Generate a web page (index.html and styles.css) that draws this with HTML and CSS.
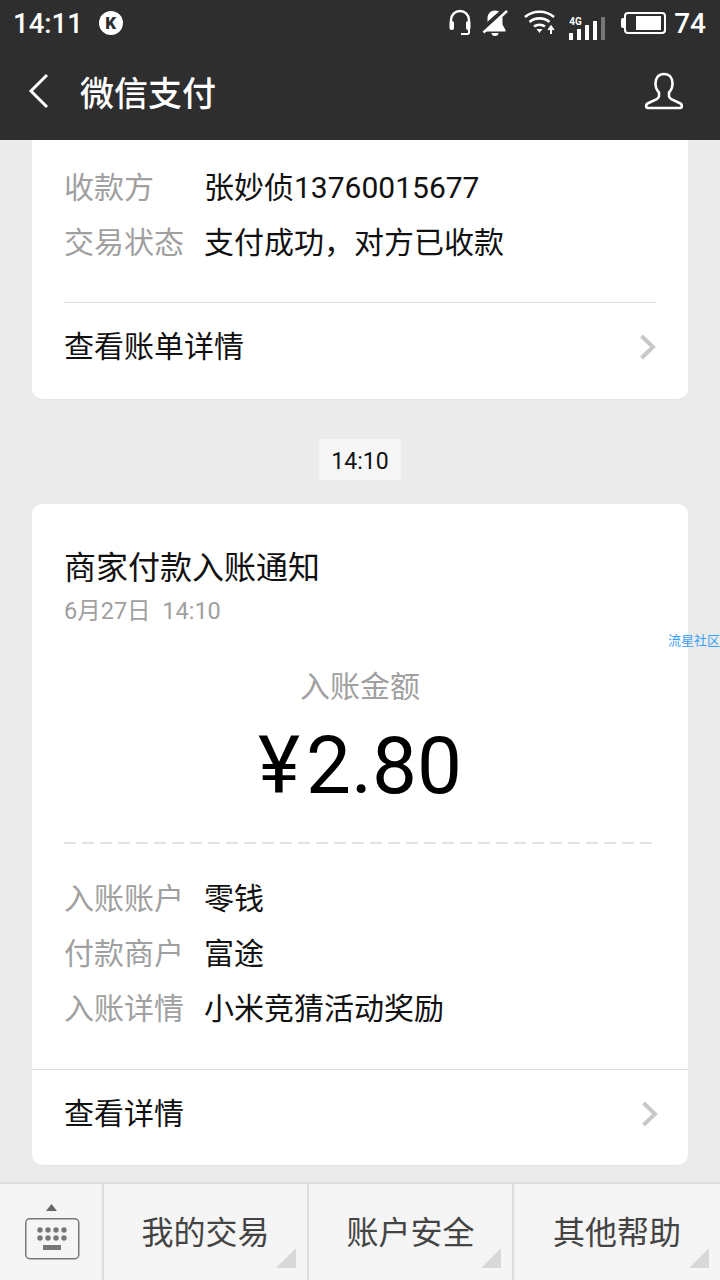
FILE: index.html
```html
<!DOCTYPE html>
<html>
<head>
<meta name="viewport" content="width=device-width, initial-scale=1">
<link rel="stylesheet" href="styles.css">
</head>
<body>

<div class="phone">
  <div class="statusbar">
    <div class="status-left">
      <span class="clock">14:11</span>
      <span class="k-badge">K</span>
    </div>
    <div class="status-right">
      <!-- headset -->
      <svg class="ic-headset" width="24" height="28" viewBox="0 0 24 28" fill="none" stroke="#fff">
        <path d="M3 14V11a9 9 0 0 1 18 0v3" stroke-width="2.4"/>
        <rect x="1.500" y="12" width="4.500" height="9" rx="2" fill="#fff" stroke="none"/>
        <rect x="18" y="12" width="4.500" height="9" rx="2" fill="#fff" stroke="none"/>
        <path d="M21 20v3.500a1.500 1.500 0 0 1-1.500 1.500H13" stroke-width="2"/>
      </svg>
      <!-- muted bell -->
      <svg class="ic-bell" width="26" height="28" viewBox="0 0 26 28">
        <path d="M13 1.500c-4.500 0-7.500 3.500-7.500 8v6L2.500 21v1.500h21V21l-3-5.500v-6c0-4.500-3-8-7.500-8z" fill="#fff"/>
        <path d="M9.500 24h7a3.500 3 0 0 1-7 0z" fill="#fff"/>
        <path d="M0 21.500 25 -0.500" stroke="#2e2e2e" stroke-width="6"/>
        <path d="M1.500 23.500 25 2" stroke="#fff" stroke-width="2.400"/>
      </svg>
      <!-- wifi -->
      <svg class="ic-wifi" width="32" height="26" viewBox="0 2 32 26" fill="none" stroke="#fff" stroke-width="2.600">
        <path d="M1 9C9 2 22 2 30 9"/>
        <path d="M5.500 14c5.500-4.800 14.500-4.800 20 0"/>
        <path d="M10 18.500c3-2.400 8-2.400 11 0"/>
        <path d="M12.500 21h6L15.500 25z" fill="#fff" stroke="none"/>
        <path d="M27 26v-6.500M24.300 22 27 18.500l2.700 3.500" stroke-width="2"/>
      </svg>
      <!-- signal -->
      <div class="signal">
        <span class="four-g">4G</span>
        <span class="bar bar1"></span>
        <span class="bar bar2"></span>
        <span class="bar bar3"></span>
        <span class="bar bar4"></span>
        <span class="bar bar5"></span>
      </div>
      <div class="battery">
        <span class="batt-tip"></span>
        <span class="batt-body"><span class="batt-fill"></span></span>
      </div>
      <span class="batt-num">74</span>
    </div>
  </div>

  <div class="navbar">
    <svg class="nav-back" width="22" height="36" viewBox="0 0 22 36" fill="none" stroke="#fff" stroke-width="3">
      <path d="M19 2 3 18l16 16"/>
    </svg>
    <span class="nav-title">微信支付</span>
    <svg class="nav-user" width="40" height="38" viewBox="0 0 40 38" fill="none" stroke="#fff" stroke-width="2.600">
      <path d="M20 2c-5.500 0-8.500 4-8.500 9.500 0 4 1.500 7 3.500 9v3.500c0 1.500-.8 2.400-2.200 3.100L3.500 31.500C1.800 32.400 1.500 36 4 36h32c2.500 0 2.200-3.600.5-4.500l-9.300-4.400c-1.400-.7-2.200-1.600-2.200-3.100v-3.500c2-2 3.500-5 3.500-9C28.500 6 25.500 2 20 2z"/>
    </svg>
  </div>

  <div class="feed">
    <div class="card card-top">
      <div class="rows rows-top">
        <div class="row"><span class="key">收款方</span><span class="val">张妙侦13760015677</span></div>
        <div class="row"><span class="key">交易状态</span><span class="val">支付成功，对方已收款</span></div>
      </div>
      <div class="link link-inset">
        <span class="link-text">查看账单详情</span>
        <svg width="17" height="26" viewBox="0 0 17 26" fill="none" stroke="#c8c8c8" stroke-width="4"><path d="M2.500 2 14 13 2.500 24"/></svg>
      </div>
    </div>

    <div class="time-wrap"><span class="time">14:10</span></div>

    <div class="card">
      <div class="card-head">
        <div class="card-title">商家付款入账通知</div>
        <div class="card-date">6月27日&nbsp;&nbsp;14:10</div>
      </div>
      <div class="amount-label">入账金额</div>
      <div class="amount"><span class="yen">¥</span>2.80</div>
      <div class="dashes"></div>
      <div class="rows">
        <div class="row"><span class="key">入账账户</span><span class="val">零钱</span></div>
        <div class="row"><span class="key">付款商户</span><span class="val">富途</span></div>
        <div class="row"><span class="key">入账详情</span><span class="val">小米竞猜活动奖励</span></div>
      </div>
      <div class="link link-full">
        <span class="link-text">查看详情</span>
        <svg width="17" height="26" viewBox="0 0 17 26" fill="none" stroke="#c8c8c8" stroke-width="4"><path d="M2.500 2 14 13 2.500 24"/></svg>
      </div>
    </div>
  </div>

  <div class="menu">
    <div class="menu-kbd">
      <svg width="56" height="57" viewBox="0 0 56 57">
        <path d="M21 8l5.500-7 5.500 7z" fill="#666"/>
        <rect x="0.750" y="15.750" width="53" height="40" rx="4" fill="none" stroke="#777" stroke-width="1.500"/>
        <g fill="#777">
          <circle cx="15" cy="27" r="2.700"/><circle cx="23" cy="27" r="2.700"/><circle cx="31" cy="27" r="2.700"/><circle cx="39" cy="27" r="2.700"/>
          <circle cx="15" cy="35" r="2.700"/><circle cx="23" cy="35" r="2.700"/><circle cx="31" cy="35" r="2.700"/><circle cx="39" cy="35" r="2.700"/>
          <rect x="18" y="42" width="18" height="5"/>
        </g>
      </svg>
    </div>
    <div class="menu-item">我的交易</div>
    <div class="menu-item">账户安全</div>
    <div class="menu-item">其他帮助</div>
  </div>

  <div class="watermark">流星社区</div>
</div>

</body>
</html>
```

FILE: styles.css
```css
* {
  box-sizing: border-box;
}

body {
  margin: 0;
  font-family: Roboto, "Noto Sans CJK SC", sans-serif;
  background: #ebebeb;
}

.phone {
  position: relative;
  width: 720px;
  height: 1280px;
  overflow: hidden;
  display: flex;
  flex-direction: column;
}

/* Status bar */
.statusbar {
  height: 46px;
  background: #2e2e2e;
  display: flex;
  justify-content: space-between;
  align-items: center;
  padding: 0 14px 0 13px;
  color: #fff;
}

.status-left, .status-right {
  display: flex;
  align-items: center;
}

.clock {
  font-size: 27.500px;
  font-weight: 500;
}

.batt-num {
  font-size: 28px;
  font-weight: 500;
}

.k-badge {
  width: 24px;
  height: 24px;
  margin-left: 16px;
  border-radius: 50%;
  background: #fff;
  color: #2e2e2e;
  font-size: 17px;
  font-weight: 900;
  display: flex;
  align-items: center;
  justify-content: center;
}

.ic-headset { margin-right: 10px; }
.ic-bell { margin-right: 16px; }
.ic-wifi { margin-right: 13px; }

.signal {
  position: relative;
  width: 36px;
  height: 23px;
  margin-right: 16px;
  display: flex;
  align-items: flex-end;
  gap: 4px;
  align-self: flex-start;
  margin-top: 10px;
}

.four-g {
  position: absolute;
  left: 0;
  top: -1px;
  font-size: 10px;
  font-weight: 700;
  line-height: 11px;
}

.bar {
  width: 4px;
  background: #fff;
}

.bar1 { height: 7px; }
.bar2 { height: 11px; }
.bar3 { height: 15px; }
.bar4 { height: 19px; }
.bar5 { height: 23px; background: #777; }

.battery {
  display: flex;
  align-items: center;
  margin-right: 8px;
}

.batt-tip {
  width: 3px;
  height: 10px;
  background: #fff;
  border-radius: 2px 0 0 2px;
}

.batt-body {
  width: 42px;
  height: 22px;
  border: 2.500px solid #fff;
  border-radius: 4px;
  display: flex;
  justify-content: flex-end;
  padding: 2px 3px;
}

.batt-fill {
  width: 25px;
  background: #fff;
}

/* Nav */
.navbar {
  height: 94px;
  background: #2e2e2e;
  color: #fff;
  display: flex;
  align-items: center;
  padding: 0 36px 4px 28px;
}

.nav-title {
  font-size: 34px;
  margin-left: 30px;
  flex: 1;
  font-weight: 500;
}

/* Feed */
.feed {
  height: 1042px;
  padding: 0 32px;
  overflow: hidden;
}

.card {
  background: #fff;
  border-radius: 10px;
  height: 661px;
  box-shadow: 0 1px 1px rgba(0, 0, 0, 0.03);
}

.card-top {
  height: 259px;
  border-radius: 0 0 10px 10px;
}

.rows {
  padding: 0 32px;
}

.rows-top {
  padding-top: 17px;
  height: 162px;
}

.row {
  display: flex;
  height: 55px;
  align-items: center;
  font-size: 30px;
}

.key {
  width: 140px;
  color: #a0a0a0;
}

.val {
  color: #111;
}

.link {
  display: flex;
  align-items: center;
  justify-content: space-between;
  font-size: 30px;
  color: #111;
  border-top: 1px solid #ddd;
}

.link-text {
  margin-bottom: 6px;
}

.link-inset {
  margin: 0 32px;
  height: 97px;
  padding-bottom: 8px;
}

.link-full {
  height: 96px;
  margin-top: 36px;
  padding: 0 30px 7px 32px;
}

.time-wrap {
  display: flex;
  justify-content: center;
  padding: 40px 0 24px;
}

.time {
  width: 82px;
  height: 41px;
  padding-top: 3px;
  background: #f6f6f6;
  border-radius: 3px;
  font-size: 23px;
  color: #111;
  display: flex;
  align-items: center;
  justify-content: center;
}

.card-head {
  padding: 42px 32px 0;
}

.card-title {
  font-size: 32px;
  line-height: 44px;
  color: #111;
}

.card-date {
  font-size: 23.500px;
  line-height: 42px;
  color: #a0a0a0;
}

.amount-label {
  margin-top: 33px;
  text-align: center;
  font-size: 30px;
  line-height: 44px;
  color: #a0a0a0;
}

.amount {
  margin-top: 12px;
  text-align: center;
  font-size: 80px;
  line-height: 90px;
  color: #000;
}

.yen {
  margin-right: 6px;
}

.dashes {
  margin: 31px 36px 24px 32px;
  height: 2px;
  background: repeating-linear-gradient(to right, #e2e2e2 0 12px, transparent 12px 18px);
}

/* Bottom menu */
.menu {
  flex: 1;
  display: flex;
  background: #f5f5f5;
  border-top: 2px solid #ddd;
}

.menu-kbd {
  width: 104px;
  padding: 19px 0 0 25px;
  border-right: 2px solid #ddd;
}

.menu-item {
  position: relative;
  width: 205px;
  display: flex;
  align-items: center;
  justify-content: center;
  padding-bottom: 4px;
  font-size: 32px;
  color: #444;
  border-right: 2px solid #ddd;
}

.menu-item:last-child {
  flex: 1;
  border-right: 0;
}

/* corner fold */
.menu-item::after {
  content: "";
  position: absolute;
  right: 11px;
  bottom: 12px;
  width: 0;
  height: 0;
  border-left: 20px solid transparent;
  border-bottom: 20px solid #d8d8d8;
}

.watermark {
  position: absolute;
  right: 0;
  top: 633px;
  font-size: 13px;
  line-height: 16px;
  color: #3aa0f5;
}
```
